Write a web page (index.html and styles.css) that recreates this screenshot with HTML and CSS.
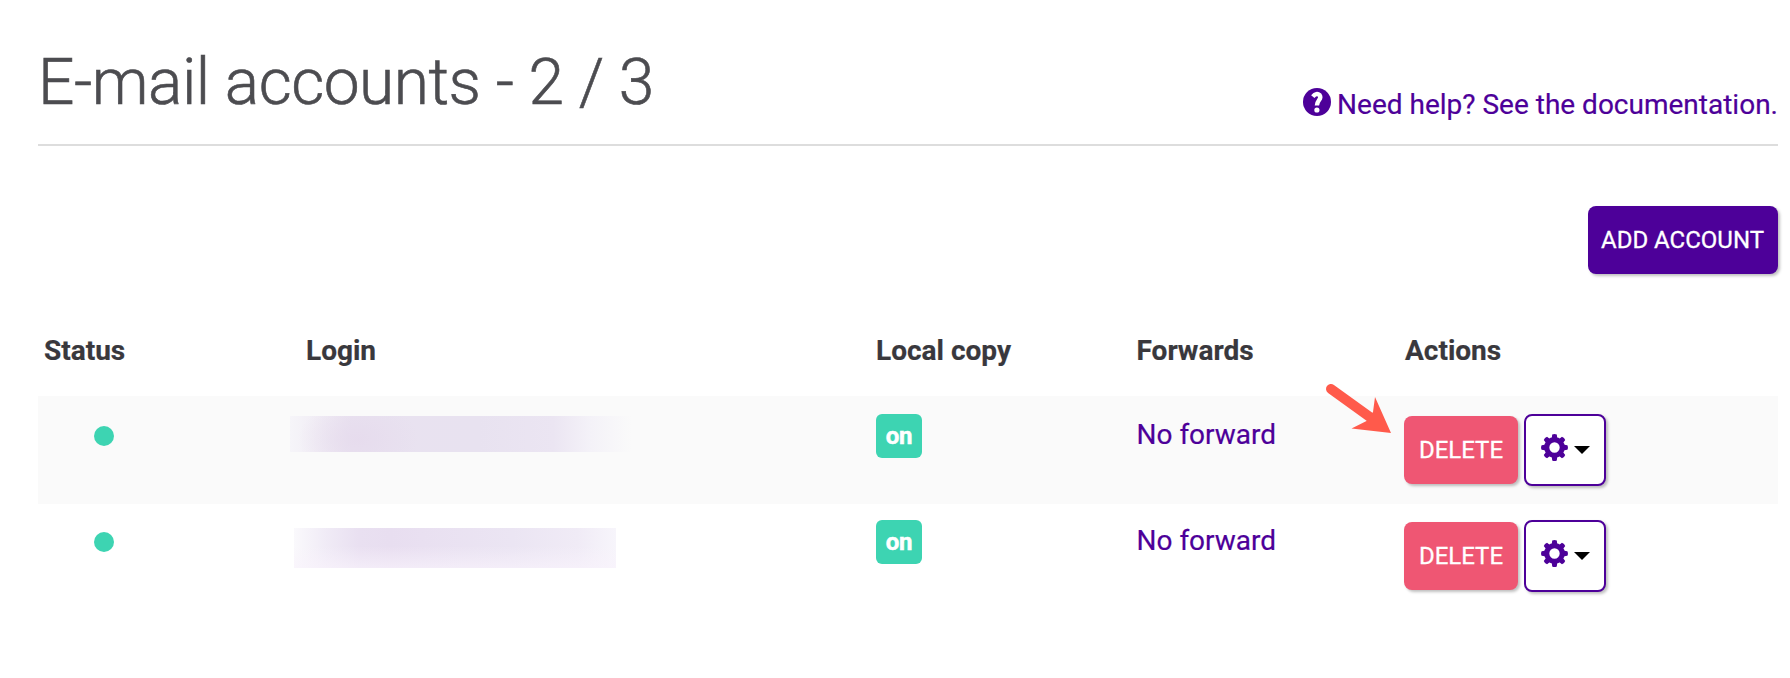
FILE: index.html
```html
<!DOCTYPE html>
<html lang="en">
<head>
<meta charset="utf-8">
<title>E-mail accounts</title>
<link rel="stylesheet" href="styles.css">
</head>
<body>
<svg class="defs" width="0" height="0">
  <symbol id="gear" viewBox="0 0 26 26">
    <g fill="currentColor">
      <path id="t" d="M10.800 .6Q13-.5 15.200 .6L15.800 5H10.200zM10.800 25.400Q13 26.500 15.200 25.400L15.800 21H10.200z"/>
      <use href="#t" transform="rotate(45 13 13)"/><use href="#t" transform="rotate(90 13 13)"/><use href="#t" transform="rotate(135 13 13)"/>
    </g>
    <circle cx="13" cy="13" r="7.500" fill="none" stroke="currentColor" stroke-width="5"/>
  </symbol>
</svg>
<main class="page">
  <header class="head">
    <h1 class="title">E-mail accounts - 2 / 3</h1>
    <a class="help"><svg class="help-icon" viewBox="0 0 28 28"><circle cx="14" cy="14" r="14" fill="currentColor"/><path d="M9.800 8.600Q13.500 4.200 16.700 7.200C19.400 11 14 12 13.900 17.500" fill="none" stroke="#fff" stroke-width="4.400"/><circle cx="13.900" cy="22" r="2.600" fill="#fff"/></svg><span>Need help? See the documentation.</span></a>
  </header>
  <div class="toolbar"><button class="btn add">ADD ACCOUNT</button></div>
  <section class="table">
    <div class="row labels"><span>Status</span><span>Login</span><span>Local copy</span><span>Forwards</span><span>Actions</span></div>
    <div class="row shaded">
      <div><i class="dot"></i></div>
      <div><div class="redacted first"></div></div>
      <div><span class="badge">on</span></div>
      <a class="forward">No forward</a>
      <div class="actions"><button class="btn delete">DELETE</button><button class="btn menu"><svg class="gear"><use href="#gear"/></svg><i class="caret"></i></button>
        <svg class="arrow" viewBox="0 0 80 65"><path d="M11 11L54 42" stroke="#ff5a4b" stroke-width="10" stroke-linecap="round"/><path d="M71 55L31.500 50.500L46.500 43L53 34L55 19z" fill="#ff5a4b"/></svg>
      </div>
    </div>
    <div class="row">
      <div><i class="dot"></i></div>
      <div><div class="redacted second"></div></div>
      <div><span class="badge">on</span></div>
      <a class="forward">No forward</a>
      <div class="actions"><button class="btn delete">DELETE</button><button class="btn menu"><svg class="gear"><use href="#gear"/></svg><i class="caret"></i></button></div>
    </div>
  </section>
</main>
</body>
</html>
```
FILE: styles.css
```css
* { box-sizing: border-box; }
body { margin: 0; background: #fff; color: #39383d; font: 28px/40px Roboto, sans-serif; -webkit-text-stroke: .2px currentColor; }
.defs { position: absolute; }
.page { padding: 0 12px 0 38px; }
.head { display: flex; justify-content: space-between; height: 146px; border-bottom: 2px solid #ddd; }
.title { margin: 43px 0 0; font-size: 64px; line-height: 80px; font-weight: 300; letter-spacing: -.48px; color: #4c4c50; white-space: nowrap; -webkit-text-stroke-width: .6px; }
.help { display: flex; margin-top: 85px; color: #4d0099; white-space: nowrap; }
.help-icon { width: 28px; height: 28px; margin: 3px 6.500px 0 0; }
.toolbar { display: flex; justify-content: flex-end; padding-top: 60px; }
.btn { display: flex; align-items: center; justify-content: center; height: 68px; padding: 0; border: 0; border-radius: 8px; color: #fff; font: 24px/32px Roboto, sans-serif; box-shadow: 2px 2px 3px rgba(0,0,0,.25); -webkit-text-stroke: .3px currentColor; }
.add { width: 190px; padding-right: 1px; background: #4d0099; }
.row { display: grid; grid-template-columns: 252px 586px 260.500px 267.500px 374px; height: 106px; padding-top: 16px; }
.labels { height: 122px; padding: 57px 0 0 6px; font-weight: 700; grid-template-columns: 262px 570px 260.500px 268.500px 373px; }
.shaded { height: 108px; padding-top: 18px; background: #fafafa; }
.dot { display: block; width: 20px; height: 20px; margin: 12px 0 0 56px; border-radius: 50%; background: #3dd4b2; }
.redacted { width: 342px; height: 36px; margin-top: 2px; background: radial-gradient(ellipse 60px 40px at 20% 65%, rgba(230,219,237,.9), rgba(230,219,237,0)), linear-gradient(90deg, #f6f5f9 0, #f1edf5 8%, #e9e2f0 18%, #e8e2f0 55%, #ebe5f2 77%, #f4f2f8 88%, #fafafa 100%); }
.second { width: 322px; height: 40px; margin: 8px 0 0 4px; background: linear-gradient(180deg, rgba(249,243,252,0) 45%, rgba(249,243,252,.65)), linear-gradient(90deg, #faf9fc 0, #f0ebf6 10%, #e9e0f1 20%, #e8def0 30%, #e9e0f1 40%, #ebe5f3 68%, #f0ebf6 88%, #f7f5fb 100%); }
.badge { display: flex; align-items: center; justify-content: center; width: 46px; height: 44px; border-radius: 6px; background: #3dd4b2; color: #fff; font-size: 24px; font-weight: 700; letter-spacing: -.2px; -webkit-text-stroke-width: .5px; }
.forward { padding-top: 1px; color: #4d0099; }
.actions { display: flex; gap: 6px; position: relative; }
.delete { width: 114px; margin-top: 2px; background: #ef5673; }
.menu { width: 82px; height: 72px; border: 2px solid #4d0099; background: #fff; color: #4d0099; gap: 6px; }
.gear { width: 27px; height: 27px; margin-bottom: 5px; }
.caret { border: 8px solid transparent; border-top-color: #000; border-bottom: 0; }
.arrow { position: absolute; left: -84px; top: -36px; width: 80px; height: 65px; }
```
